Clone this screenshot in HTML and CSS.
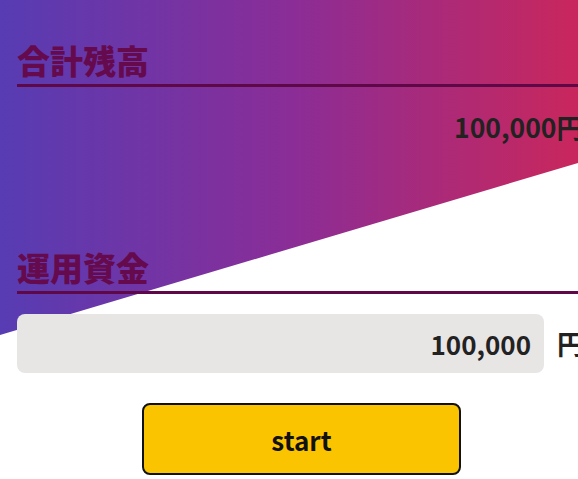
FILE: index.html
```html
<!DOCTYPE html>
<html lang="ja">
<head>
  <meta charset="UTF-8">
  <meta name="viewport" content="width=device-width, initial-scale=1.0">
  <title>運用シミュレーター</title>
  <link rel="stylesheet" href="styles.css">
</head>
<body>
  <div class="backdrop"></div>

  <main class="container">
    <section class="block">
      <h2 class="block-title">合計残高</h2>
      <p class="total">100,000円</p>
    </section>

    <section class="block block-fund">
      <h2 class="block-title">運用資金</h2>
      <div class="fund-row">
        <input type="text" class="fund-input" value="100,000" />
        <span class="unit">円</span>
      </div>
    </section>

    <button class="start-btn">start</button>
  </main>
</body>
</html>
```

FILE: styles.css
```css
body {
  font-family: "Noto Sans CJK JP", "Noto Sans", sans-serif;
  margin: 0;
  padding: 0;
  background-color: white;
  color: #222;
  overflow: hidden;
}
.backdrop {
  position: absolute;
  top: 0;
  left: 0;
  width: 100%;
  height: 335px;
  background: linear-gradient(90deg, #573cb3 0%, #8a2d97 50%, #c9275c 100%);
  clip-path: polygon(0 0, 100% 0, 100% 163px, 0 100%);
  z-index: -1;
}
.container {
  width: 569px;
  margin-left: 17px;
  padding-top: 40px;
  display: flex;
  flex-direction: column;
}
.block-title {
  margin: 0;
  font-size: 33px;
  line-height: 40px;
  font-weight: 900;
  color: #660a4e;
  padding-bottom: 4px;
  border-bottom: 3px solid #5e0848;
}
.total {
  margin: 20px 0 0;
  padding-right: 3px;
  text-align: right;
  font-size: 26.5px;
  line-height: 39px;
  font-weight: 700;
  color: #222;
}
.block-fund {
  margin-top: 101px;
}
.fund-row {
  margin-top: 20px;
  display: flex;
  align-items: center;
  gap: 13px;
}
.fund-input {
  width: 527px;
  height: 59px;
  box-sizing: border-box;
  padding: 0 13px;
  border: none;
  border-radius: 8px;
  background-color: #e8e5e5;
  font-family: inherit;
  font-size: 26px;
  font-weight: 700;
  color: #222;
  text-align: right;
}
.unit {
  font-size: 27px;
  font-weight: 700;
}
.start-btn {
  align-self: center;
  margin-top: 30px;
  width: 319px;
  height: 72px;
  background-color: #fbc400;
  border: 2px solid #111;
  border-radius: 8px;
  font-family: inherit;
  font-size: 26px;
  font-weight: 700;
  color: #111;
  cursor: pointer;
}
```
